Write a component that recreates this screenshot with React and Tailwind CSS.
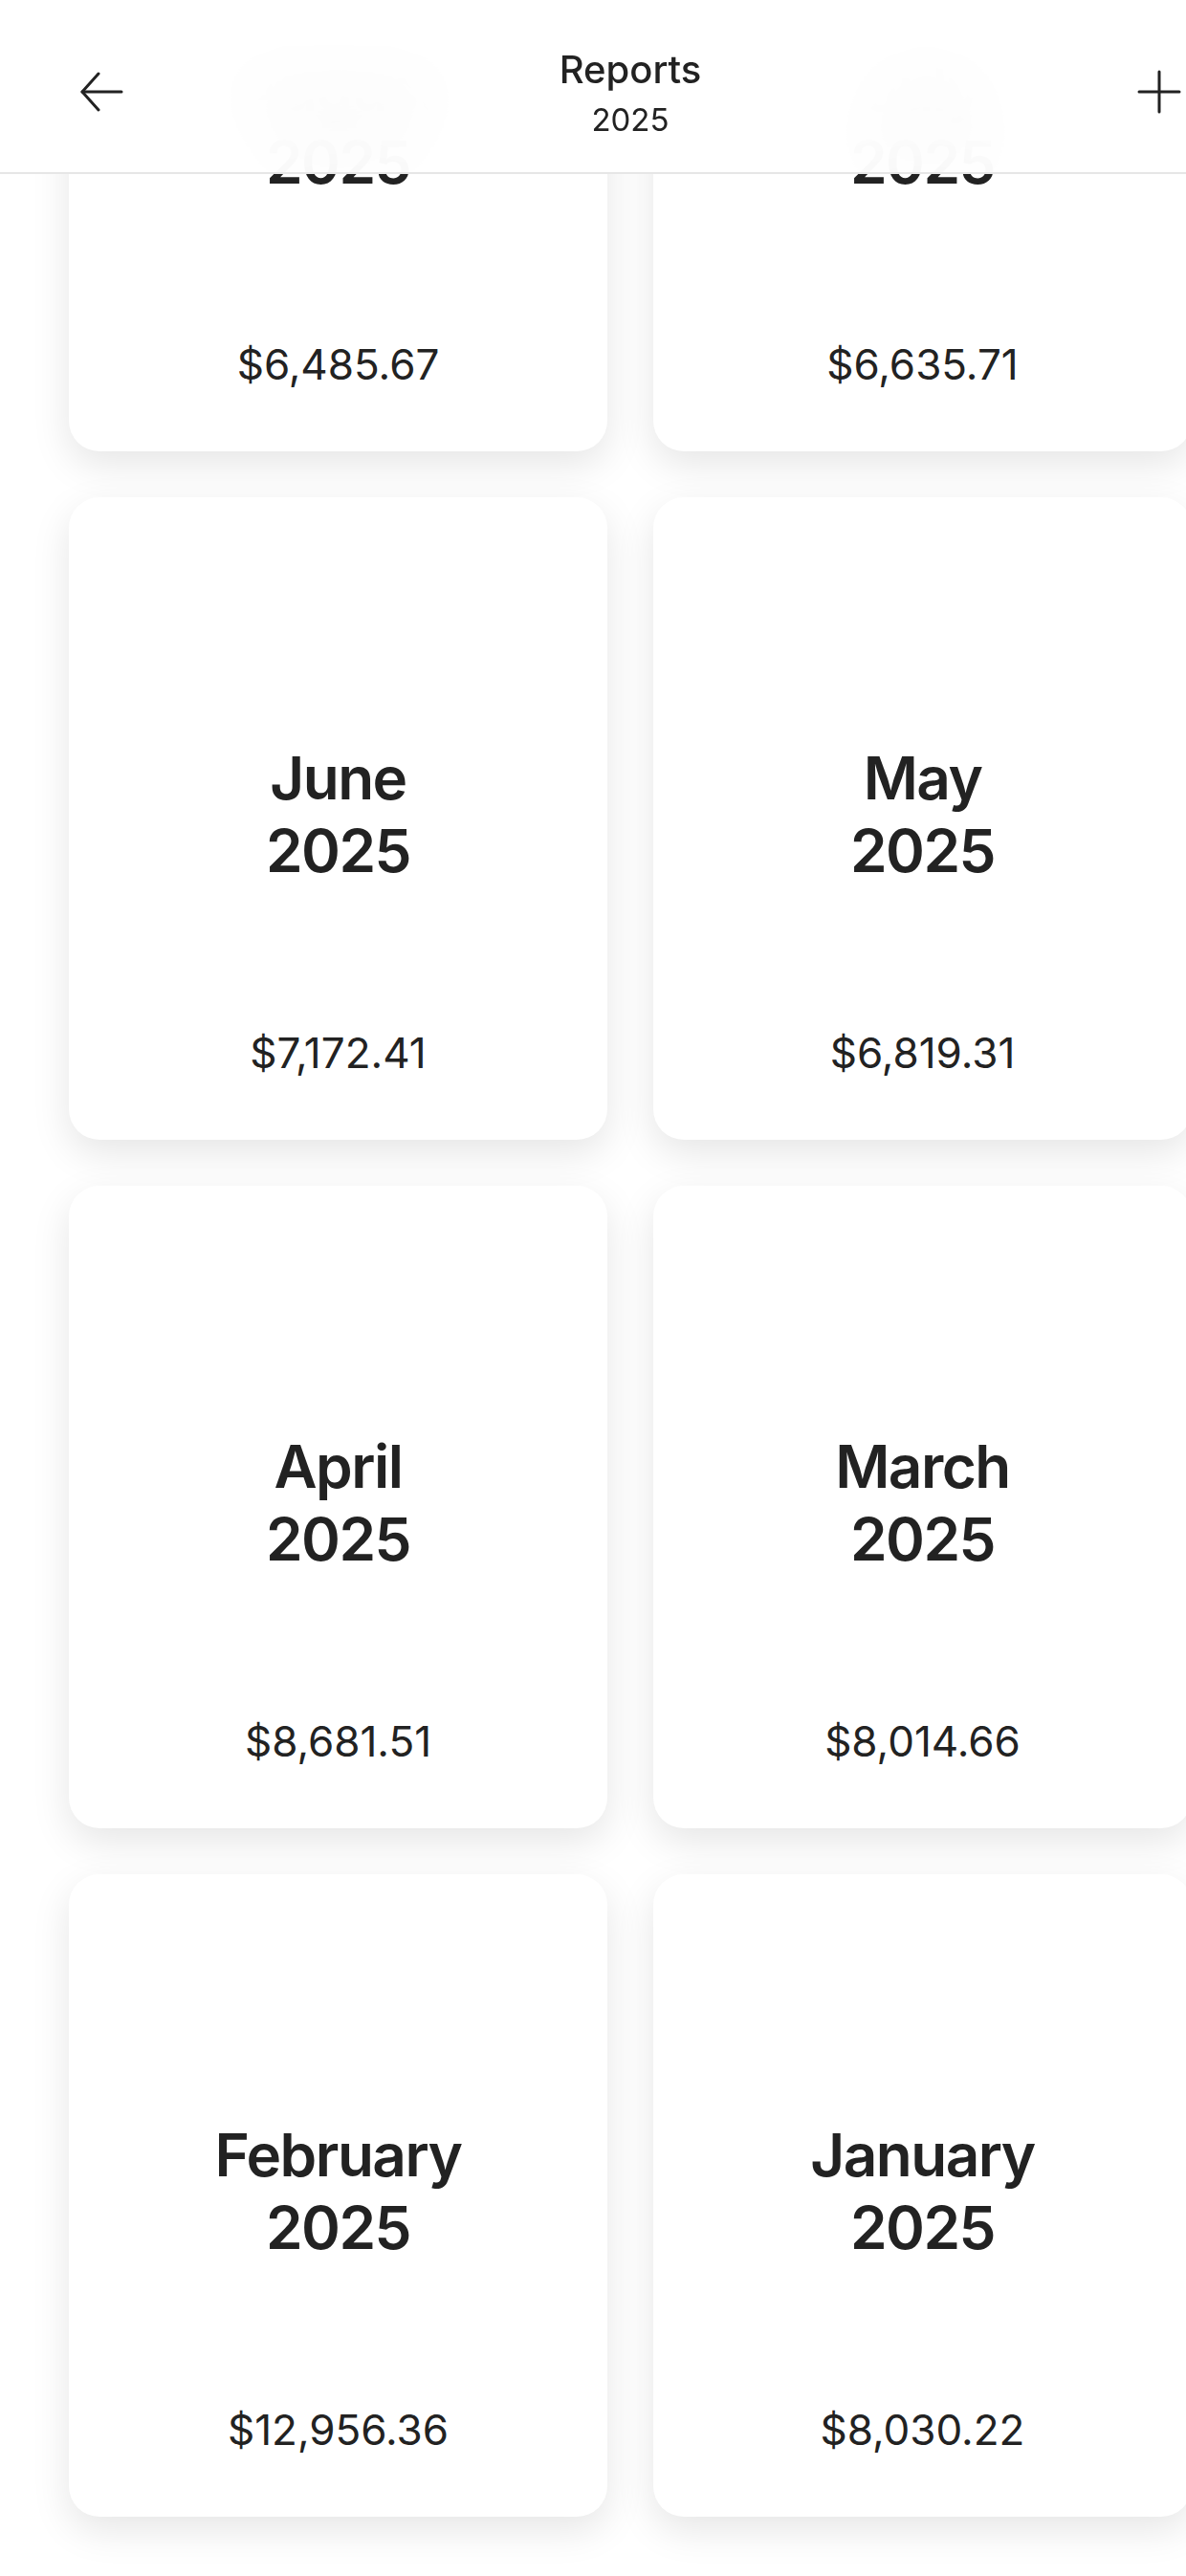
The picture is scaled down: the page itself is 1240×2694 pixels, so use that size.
import React from "react";

const cards = [
  { m: "August", y: "2025", a: "$6,485.67" },
  { m: "July", y: "2025", a: "$6,635.71" },
  { m: "June", y: "2025", a: "$7,172.41" },
  { m: "May", y: "2025", a: "$6,819.31" },
  { m: "April", y: "2025", a: "$8,681.51" },
  { m: "March", y: "2025", a: "$8,014.66" },
  { m: "February", y: "2025", a: "$12,956.36" },
  { m: "January", y: "2025", a: "$8,030.22" },
];

function Card({ m, y, a }) {
  return (
    <div className="h-[672px] bg-white rounded-[32px] shadow-[0_14px_40px_rgba(0,0,0,0.10)] flex flex-col py-[64px]">
      <div className="h-[45px]" />
      <div className="flex-1 flex items-center justify-center">
        <div className="text-center text-[62px] leading-[76px] font-semibold tracking-[-1.5px] text-[#222222]">
          <div>{m}</div>
          <div>{y}</div>
        </div>
      </div>
      <div className="h-[53px] flex items-center justify-center text-[44px] leading-[53px] font-normal text-[#222222]">
        {a}
      </div>
    </div>
  );
}

export default function App() {
  return (
    <div
      className="relative w-[1240px] h-[2694px] overflow-hidden bg-white"
      style={{ fontFamily: "Inter, 'Noto Sans', sans-serif" }}
    >
      <div className="w-[1318px]">
        <div className="grid grid-cols-2 gap-x-[48px] gap-y-[48px] px-[72px] mt-[-200px]">
          {cards.map((c) => (
            <Card key={c.m} {...c} />
          ))}
        </div>
      </div>

      <div className="absolute top-0 left-0 w-[1318px] h-[182px] bg-white/95 backdrop-blur-2xl border-b-2 border-[#e6e6e6] flex items-start justify-between">
        <div className="w-[212px] h-[180px] flex items-center justify-center pt-[12px]">
          <svg width="46" height="42" viewBox="0 0 46 42" fill="none" stroke="#222222" strokeWidth="3" strokeLinecap="round" strokeLinejoin="round">
            <path d="M20 2 L3 21 L20 40" />
            <path d="M3 21 H44" />
          </svg>
        </div>
        <div className="flex flex-col items-center pt-[49px] text-[#222222]">
          <div className="text-[40px] leading-[48px] font-medium">Reports</div>
          <div className="text-[33px] leading-[40px] font-normal mt-[8px]">2025</div>
        </div>
        <div className="w-[212px] h-[180px] flex items-center justify-center pt-[12px]">
          <svg width="46" height="46" viewBox="0 0 46 46" fill="none" stroke="#222222" strokeWidth="3" strokeLinecap="round">
            <path d="M23 2 V44" />
            <path d="M2 23 H44" />
          </svg>
        </div>
      </div>
    </div>
  );
}
